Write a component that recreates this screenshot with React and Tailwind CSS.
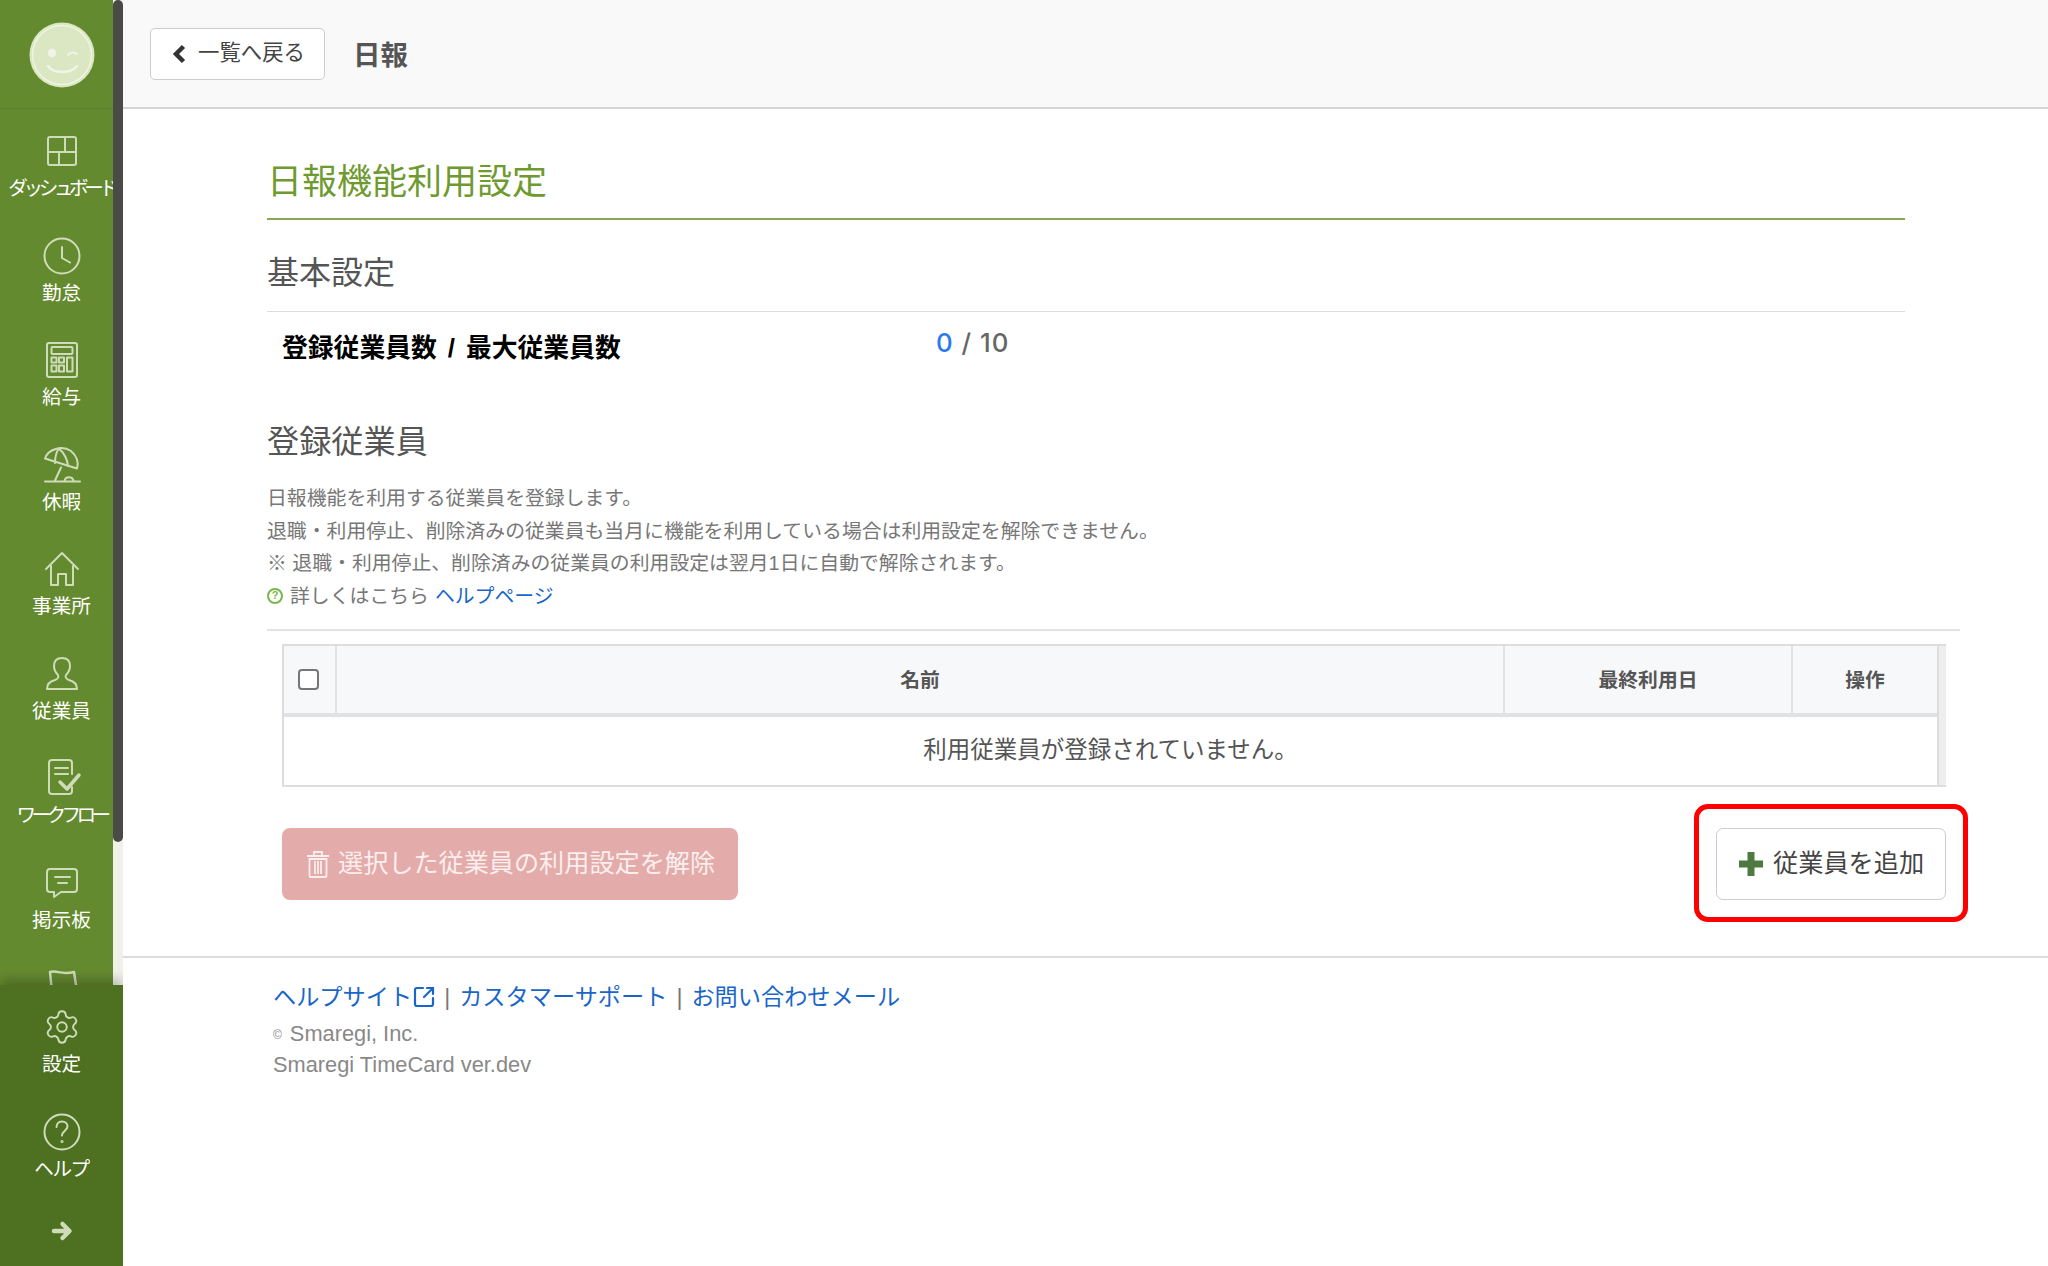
import React from 'react';
import { Settings, SquareArrowOutUpRight } from 'lucide-react';

const iconStroke = '#cfdcb9';

const Svg = ({ children }) => (
  <svg width="40" height="40" viewBox="0 0 40 40" fill="none" stroke={iconStroke} strokeWidth="2" strokeLinecap="round" strokeLinejoin="round">
    {children}
  </svg>
);

const icons = {
  dashboard: (
    <Svg>
      <rect x="6" y="6" width="28" height="28" rx="2" />
      <path d="M6 21h28M23 6v15M17 21v13" />
    </Svg>
  ),
  clock: (
    <Svg>
      <circle cx="20" cy="20" r="17.5" />
      <path d="M20 11v11l8 4.5" />
    </Svg>
  ),
  calc: (
    <Svg>
      <rect x="5" y="3" width="30" height="34" rx="2" />
      <rect x="9.5" y="7" width="21" height="7" rx="1" />
      <rect x="9.5" y="17.5" width="5" height="5" />
      <rect x="17" y="17.5" width="5" height="5" />
      <rect x="9.5" y="25.5" width="5" height="6" />
      <rect x="17" y="25.5" width="5" height="6" />
      <rect x="25" y="17.5" width="5.5" height="14" />
    </Svg>
  ),
  umbrella: (
    <Svg>
      <path d="M3 13.5C6 4 20 0 29 6c6 5 8 12 6 17.5z" />
      <path d="M17 3.5C13.5 8 13 13 13 18M17 3.5C23 9 25.5 15 26 21" />
      <path d="M19 22.5L13 35.5" />
      <path d="M22.5 36a4.6 4.6 0 0 1 9 0" />
      <path d="M3 36.5h35" />
    </Svg>
  ),
  home: (
    <Svg>
      <path d="M4 20L20 4l16 16" />
      <path d="M9 17v19h7V25h8v11h7V17" />
    </Svg>
  ),
  person: (
    <Svg>
      <path d="M20 4c-5 0-8 3-8 8 0 4 2 7 4 9 1 2 0 4-3 5-4 1-8 4-8 9h30c0-5-4-8-8-9-3-1-4-3-3-5 2-2 4-5 4-9 0-5-3-8-8-8z" />
    </Svg>
  ),
  workflow: (
    <Svg>
      <path d="M30 16V5a3 3 0 0 0-3-3H10a3 3 0 0 0-3 3v28a3 3 0 0 0 3 3h17a3 3 0 0 0 3-3v-4" />
      <path d="M13 10h13M13 16h13" />
      <path d="M18 24l7 7 12-14" strokeWidth="3.5" />
    </Svg>
  ),
  chat: (
    <Svg>
      <path d="M8 6h24a3 3 0 0 1 3 3v17a3 3 0 0 1-3 3H19l-7 5v-5H8a3 3 0 0 1-3-3V9a3 3 0 0 1 3-3z" />
      <path d="M13 14h15M16 20h9" />
    </Svg>
  ),
  flag: (
    <Svg>
      <path d="M8 5c7-2 11 3 24 0l4 26M8 5l3 30" strokeWidth="2.5" />
    </Svg>
  ),
  settings: <Settings size={38} color={iconStroke} strokeWidth={1.2} />,
  help: (
    <Svg>
      <circle cx="20" cy="20" r="17.5" />
      <path d="M14.5 15c0-3.5 2.5-5.5 5.5-5.5s5.5 2 5.5 5c0 4-5.5 4.5-5.5 9" />
      <circle cx="20" cy="29.5" r="0.6" />
    </Svg>
  ),
};

const NavItem = ({ icon, label, tracking = '' }) => (
  <div className="flex h-[104.5px] shrink-0 flex-col items-center pt-[22px]">
    <div className="flex h-[40px] w-[40px] items-center justify-center">{icons[icon]}</div>
    {label && <div className={`mt-[7px] whitespace-nowrap text-[19.6px] leading-[20px] text-white ${tracking}`}>{label}</div>}
  </div>
);

const Logo = () => (
  <svg width="66" height="66" viewBox="0 0 66 66" fill="none">
    <circle cx="33" cy="33" r="32.5" fill="#dbe7c2" />
    <circle cx="33" cy="33" r="29.5" stroke="#eef4e2" strokeWidth="1.5" />
    <circle cx="23" cy="31" r="4.2" fill="#f1f5e7" />
    <path d="M39 33c2-3 6-3 9-1" stroke="#f1f5e7" strokeWidth="2" strokeLinecap="round" />
    <path d="M19 44c6 8 22 8 29 0" stroke="#f1f5e7" strokeWidth="2.5" strokeLinecap="round" />
  </svg>
);

const Sidebar = () => (
  <aside className="flex h-full w-[123px] shrink-0 flex-col overflow-hidden bg-[#648a2f]">
    <div className="relative min-h-0 flex-1 overflow-hidden">
      <div className="flex h-[109px] items-center justify-center border-b border-[#5b7f2a] pt-[2px]">
        <Logo />
      </div>
      <NavItem icon="dashboard" label="ダッシュボード" tracking="tracking-[-4.4px]" />
      <NavItem icon="clock" label="勤怠" />
      <NavItem icon="calc" label="給与" />
      <NavItem icon="umbrella" label="休暇" />
      <NavItem icon="home" label="事業所" />
      <NavItem icon="person" label="従業員" />
      <NavItem icon="workflow" label="ワークフロー" tracking="tracking-[-4.6px]" />
      <NavItem icon="chat" label="掲示板" />
      <NavItem icon="flag" />
      <div className="absolute top-0 right-0 h-full w-[10px] bg-[#f0f2ea]">
        <div className="h-[842px] rounded-md bg-[#4a4a46]" />
      </div>
    </div>
    <div className="relative z-10 h-[281px] shrink-0 bg-[#4d7021] shadow-[0_-6px_10px_rgba(0,0,0,0.22)]">
      <NavItem icon="settings" label="設定" />
      <NavItem icon="help" label="ヘルプ" tracking="tracking-[-1.4px]" />
      <div className="flex justify-center pt-[26px]">
        <svg width="22" height="22" viewBox="0 0 22 22" fill="none" stroke="#cfdcb9" strokeWidth="4.5" strokeLinecap="round" strokeLinejoin="round">
          <path d="M3 11h15M11.5 4l7 7-7 7" />
        </svg>
      </div>
    </div>
  </aside>
);

const TrashIcon = () => (
  <svg width="24" height="28" viewBox="0 0 24 28" fill="none" stroke="#fbeeee" strokeWidth="1.8">
    <path d="M1 6h22M8 5V2h8v3" />
    <path d="M3.5 9v17a1 1 0 0 0 1 1h15a1 1 0 0 0 1-1V9z" />
    <path d="M9 11v13M12 11v13M15 11v13" />
  </svg>
);

const HelpDot = () => (
  <span className="mr-[7px] inline-flex h-[16px] w-[16px] items-center justify-center rounded-full border-2 border-[#7ab648] text-[11px] leading-none font-bold text-[#7ab648]">?</span>
);

const EmployeeTable = () => (
  <div className="ml-[15px] flex h-[143px] w-[1664px] border-t-2 border-b-2 border-l-2 border-[#dddddd] text-[#555555]">
    <div className="flex min-w-0 flex-1 flex-col border-r-2 border-[#dddddd]">
      <div className="flex h-[67px] shrink-0 bg-[#f7f8fa] text-[19.8px] font-bold">
        <div className="flex w-[53px] items-center justify-center border-r-2 border-[#e2e2e2]">
          <span className="mr-[2px] h-[21px] w-[21px] rounded-[4px] border-2 border-[#767676] bg-white" />
        </div>
        <div className="flex flex-1 items-center justify-center border-r-2 border-[#e2e2e2] pt-[2px]">名前</div>
        <div className="flex w-[288px] items-center justify-center border-r-2 border-[#e2e2e2] pt-[2px]">最終利用日</div>
        <div className="flex w-[144px] items-center justify-center pt-[2px]">操作</div>
      </div>
      <div className="flex flex-1 items-center justify-center border-t-4 border-[#e0e1e6] bg-white text-[23.5px]">
        利用従業員が登録されていません。
      </div>
    </div>
    <div className="w-[7px] shrink-0 bg-[#eeeeee]" />
  </div>
);

export default function App() {
  return (
    <div className="flex h-[1266px] w-[2048px] overflow-hidden bg-white font-['Liberation_Sans','Noto_Sans_CJK_JP',sans-serif]">
      <Sidebar />
      <main className="flex min-w-0 flex-1 flex-col">
        <header className="flex h-[109px] shrink-0 items-center border-b-2 border-[#d4d4d4] bg-[#f9f9f9] pl-[27px]">
          <button className="flex h-[52px] w-[175px] items-center rounded-[5px] border border-[#cccccc] bg-white pl-[21px] text-[21.4px] text-[#444444]">
            <svg width="14" height="20" viewBox="0 0 14 20" fill="none" stroke="#333333" strokeWidth="4.5" strokeLinejoin="miter">
              <path d="M11.5 2.5L4 10l7.5 7.5" />
            </svg>
            <span className="ml-[12px]">一覧へ戻る</span>
          </button>
          <h2 className="ml-[28px] pt-[4px] text-[27.5px] font-bold text-[#555555]">日報</h2>
        </header>

        <div className="pr-[143px] pl-[144px]">
          <h1 className="border-b-2 border-[#8aa84f] pt-[55px] pb-[18px] text-[35px] leading-[36px] font-normal text-[#6f9a30]">日報機能利用設定</h1>
          <h3 className="h-[92px] border-b border-[#dddddd] pt-[37px] text-[32px] leading-[32px] font-normal text-[#555555]">基本設定</h3>
          <div className="flex h-[60px] items-center pt-[13px] pl-[15px]">
            <span className="w-[654px] text-[25.8px] font-bold text-black">登録従業員数<span className="mx-[11px]">/</span>最大従業員数</span>
            <span className="-mt-[10px] font-['Inter'] text-[25.8px] font-medium tracking-[1px] text-[#666666]"><span className="text-[#2979f0]">0</span> / 10</span>
          </div>
          <h3 className="pt-[54px] text-[32.2px] leading-[32px] font-normal text-[#555555]">登録従業員</h3>
          <div className="mt-[24px] text-[19.85px] leading-[32.5px] text-[#777777]">
            <p>日報機能を利用する従業員を登録します。</p>
            <p>退職・利用停止、削除済みの従業員も当月に機能を利用している場合は利用設定を解除できません。</p>
            <p>※ 退職・利用停止、削除済みの従業員の利用設定は翌月1日に自動で解除されます。</p>
            <p className="flex items-center">
              <HelpDot />詳しくはこちら <a className="ml-[6px] text-[#1a66c8]">ヘルプページ</a>
            </p>
          </div>
          <div className="mt-[17px] mr-[-55px] border-t-2 border-[#e4e4e4]" />
          <div className="mt-[13px]"><EmployeeTable /></div>
          <div className="relative mt-[41px] ml-[15px] flex h-[72px] w-[1664px] justify-between">
            <button className="flex h-full w-[456px] items-center rounded-[8px] bg-[#e3acaa] pl-[24px] text-[25.15px] text-[#fbeeee]">
              <TrashIcon />
              <span className="ml-[8px]">選択した従業員の利用設定を解除</span>
            </button>
            <button className="flex h-full w-[230px] items-center rounded-[7px] border border-[#cccccc] bg-white pl-[22px] text-[25.2px] text-[#444444]">
              <svg width="24" height="24" viewBox="0 0 24 24" fill="#4d7a3e">
                <path d="M8.5 0h7v8.5H24v7h-8.5V24h-7v-8.5H0v-7h8.5z" />
              </svg>
              <span className="ml-[10px]">従業員を追加</span>
            </button>
            <div className="absolute top-[-24px] right-[-22px] h-[118px] w-[274px] rounded-[14px] border-[5px] border-[#ff0000]" />
          </div>
        </div>

        <footer className="mt-[56px] border-t-2 border-[#dcdcdc] pt-[25px] pl-[150px] text-[#888888]">
          <div className="flex h-[28px] items-center text-[23.2px] text-[#1a66c8]">
            <a>ヘルプサイト</a>
            <SquareArrowOutUpRight size={24} strokeWidth={2.2} className="mr-[8px]" />
            <span className="text-[#777777]">|</span>
            <a className="ml-[9px]">カスタマーサポート</a>
            <span className="ml-[9px] text-[#777777]">|</span>
            <a className="ml-[9px]">お問い合わせメール</a>
          </div>
          <p className="mt-[8px] text-[21.8px] leading-[30px]"><span className="mr-[8px] align-[2px] text-[12px]">©</span>Smaregi, Inc.</p>
          <p className="text-[21.8px] leading-[30px]">Smaregi TimeCard ver.dev</p>
        </footer>
      </main>
    </div>
  );
}
